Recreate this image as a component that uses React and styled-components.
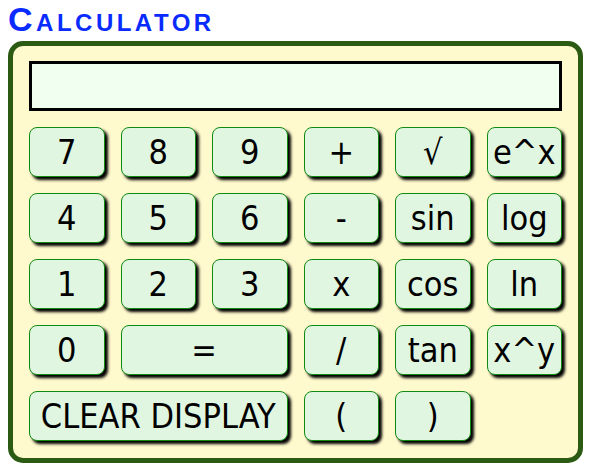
import React from 'react'
import styled, { createGlobalStyle } from 'styled-components'

const GlobalStyle = createGlobalStyle`
  body {
    margin: 0;
    background: #ffffff;
    font-family: "Liberation Sans", Arial, sans-serif;
  }
`

const Page = styled.div`
  padding: 1px 8px 0;
`

const Title = styled.div`
  font-family: "Liberation Sans", Arial, sans-serif;
  font-weight: bold;
  font-variant: small-caps;
  font-size: 34px;
  line-height: 36px;
  letter-spacing: 3.5px;
  color: #0a2bff;
  margin-bottom: 4px;
`

const Body = styled.div`
  width: 575px;
  box-sizing: border-box;
  border: 5px solid #2b5a13;
  border-radius: 15px;
  background: #fffacd;
  padding: 15px 16px 17px;
`

const Display = styled.div`
  height: 50px;
  box-sizing: border-box;
  border: 3px solid #000;
  background: #f0fff0;
  margin-bottom: 16px;
`

const Keys = styled.div`
  display: grid;
  grid-template-columns: repeat(6, 1fr);
  grid-auto-rows: 50px;
  gap: 16px;
`

const Key = styled.button`
  grid-column: span ${p => p.$span || 1};
  margin: 0;
  padding: 0;
  box-sizing: border-box;
  border: 1px solid #118a11;
  border-radius: 8px;
  background: #e0f6e0;
  box-shadow: 3px 3px 3px #000;
  color: #000;
  font-family: "DejaVu Sans Condensed", "DejaVu Sans", sans-serif;
  font-size: 34px;
  line-height: 1;
  white-space: nowrap;
  cursor: pointer;
`

const rows = [
  ['7', '8', '9', '+', '√', 'e^x'],
  ['4', '5', '6', '-', 'sin', 'log'],
  ['1', '2', '3', 'x', 'cos', 'ln'],
  ['0', ['=', 2], '/', 'tan', 'x^y'],
  [['CLEAR DISPLAY', 3], '(', ')'],
]

export default function App() {
  return (
    <Page>
      <GlobalStyle />
      <Title>Calculator</Title>
      <Body>
        <Display />
        <Keys>
          {rows.flat().map((k, i) => {
            const [label, span] = Array.isArray(k) ? k : [k, 1]
            return <Key key={i} $span={span}>{label}</Key>
          })}
        </Keys>
      </Body>
    </Page>
  )
}
